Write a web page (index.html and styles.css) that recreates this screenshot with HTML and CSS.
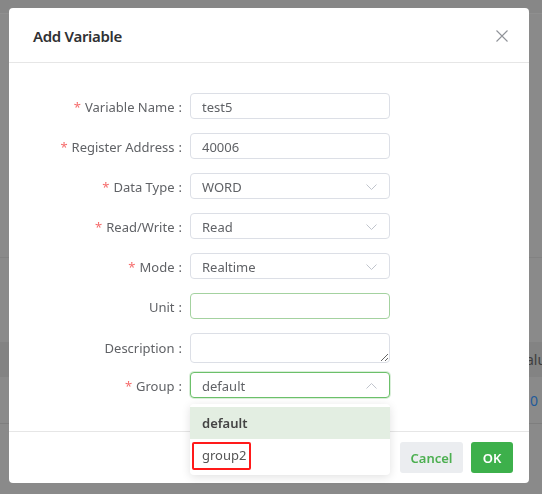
FILE: index.html
```html
<!DOCTYPE html>
<html>
<head>
<meta charset="utf-8">
<link rel="stylesheet" href="styles.css">
</head>
<body>
<div class="page">
  <div class="topbar"></div>
  <div class="page-area"></div>
  <div class="table-head"><span class="th-text">Value</span></div>
  <div class="table-row"><span class="td-link">0</span></div>
</div>

<div class="modal">
  <div class="modal-header">
    <span class="modal-title">Add Variable</span>
    <svg class="close" width="12" height="12" viewBox="0 0 12 12"><path d="M0.5 0.5 L11.5 11.5 M11.5 0.5 L0.5 11.5" stroke="#909399" stroke-width="1.1" fill="none"/></svg>
  </div>
  <div class="modal-body">
    <div class="row">
      <label class="label"><span class="req">*</span>Variable Name<span class="colon">:</span></label>
      <div class="input"><span class="val">test5</span></div>
    </div>
    <div class="row">
      <label class="label"><span class="req">*</span>Register Address<span class="colon">:</span></label>
      <div class="input"><span class="val">40006</span></div>
    </div>
    <div class="row">
      <label class="label"><span class="req">*</span>Data Type<span class="colon">:</span></label>
      <div class="input select"><span class="val">WORD</span>
        <svg class="arrow" width="11" height="6" viewBox="0 0 11 6"><path d="M0.5 0.5 L5.5 5.5 L10.5 0.5" stroke="#c0c4cc" stroke-width="1" fill="none"/></svg>
      </div>
    </div>
    <div class="row">
      <label class="label"><span class="req">*</span>Read/Write<span class="colon">:</span></label>
      <div class="input select"><span class="val">Read</span>
        <svg class="arrow" width="11" height="6" viewBox="0 0 11 6"><path d="M0.5 0.5 L5.5 5.5 L10.5 0.5" stroke="#c0c4cc" stroke-width="1" fill="none"/></svg>
      </div>
    </div>
    <div class="row">
      <label class="label"><span class="req">*</span>Mode<span class="colon">:</span></label>
      <div class="input select"><span class="val">Realtime</span>
        <svg class="arrow" width="11" height="6" viewBox="0 0 11 6"><path d="M0.5 0.5 L5.5 5.5 L10.5 0.5" stroke="#c0c4cc" stroke-width="1" fill="none"/></svg>
      </div>
    </div>
    <div class="row">
      <label class="label">Unit<span class="colon">:</span></label>
      <div class="input focus-soft"></div>
    </div>
    <div class="row row-text">
      <label class="label">Description<span class="colon">:</span></label>
      <textarea class="textarea"></textarea>
    </div>
    <div class="row">
      <label class="label"><span class="req">*</span>Group<span class="colon">:</span></label>
      <div class="group-wrap">
        <div class="input select focus"><span class="val">default</span>
          <svg class="arrow" width="11" height="6" viewBox="0 0 11 6"><path d="M0.5 5.5 L5.5 0.5 L10.5 5.5" stroke="#c0c4cc" stroke-width="1" fill="none"/></svg>
        </div>
        <div class="dropdown">
          <div class="option selected">default</div>
          <div class="option">group2<span class="mark"></span></div>
        </div>
      </div>
    </div>
  </div>
  <div class="modal-footer">
    <button class="btn btn-cancel">Cancel</button>
    <button class="btn btn-ok">OK</button>
  </div>
</div>
</body>
</html>
```

FILE: styles.css
```css
* { box-sizing: border-box; }
html, body { margin: 0; padding: 0; }
body {
  background: #8a8a8a;
  font-family: "Noto Sans", "Open Sans", Arial, sans-serif;
  width: 542px;
  height: 494px;
  overflow: hidden;
}
.page { display: flex; flex-direction: column; }
.topbar { height: 14px; background: #878787; border-bottom: 1px solid #8f8f8f; }
.page-area { height: 244px; border-bottom: 1px solid #828282; }
.table-head {
  margin-top: 84px;
  height: 35px;
  background: #838383;
  display: flex;
  align-items: center;
  justify-content: flex-end;
  font-size: 14px;
  color: #3e3e3e;
}
.th-text { margin-right: -12px; }
.table-row {
  height: 47px;
  border-bottom: 1px solid #7e7e7e;
  display: flex;
  align-items: center;
  justify-content: flex-end;
  font-size: 14px;
}
.td-link { color: #1f5a9a; margin-right: 4px; }

.modal {
  position: fixed;
  left: 9px;
  top: 8px;
  width: 520px;
  height: 475px;
  background: #fff;
  border-radius: 4px;
  display: flex;
  flex-direction: column;
}
.modal-header {
  height: 55px;
  border-bottom: 1px solid #e6e6e6;
  display: flex;
  align-items: center;
  justify-content: space-between;
  padding: 0 21px 0 24px;
}
.modal-title {
  font-size: 15px;
  font-weight: 600;
  letter-spacing: -0.3px;
  color: #303133;
  margin-top: 1px;
}
.close { margin-top: 2px; }
.modal-body {
  flex: 1;
  padding-top: 30px;
}
.row {
  display: flex;
  align-items: center;
  margin-bottom: 14px;
}
.row-text { margin-bottom: 9px; align-items: flex-start; }
.row-text .label { line-height: 28px; }
.label {
  width: 181px;
  padding-right: 8px;
  text-align: right;
  font-size: 13px;
  color: #606266;
  padding-top: 1px;
}
.req { color: #f56c6c; margin-right: 4px; }
.colon { margin-left: 4px; }
.input {
  width: 200px;
  height: 26px;
  border: 1px solid #dcdfe6;
  border-radius: 4px;
  display: flex;
  align-items: center;
  justify-content: space-between;
  padding: 1px 11px 0;
  font-size: 13px;
  color: #606266;
  background: #fff;
}
.arrow { margin-right: 1px; }
.focus-soft { border-color: #a4d2a0; }
.focus { border-color: #6cc06a; box-shadow: 0 0 0 1px rgba(108, 192, 106, 0.25); }
.textarea {
  width: 200px;
  height: 30px;
  border: 1px solid #dcdfe6;
  border-radius: 4px;
  resize: vertical;
  margin: 0;
  font-family: inherit;
  font-size: 13px;
}
.group-wrap { position: relative; }
.dropdown {
  position: absolute;
  left: 0;
  top: 32px;
  width: 200px;
  background: #fff;
  border-radius: 4px;
  box-shadow: 0 2px 10px rgba(0, 0, 0, 0.12);
  padding: 3px 0 4px;
  z-index: 2;
}
.option {
  position: relative;
  height: 32px;
  line-height: 33px;
  padding-left: 12px;
  font-size: 13px;
  color: #555;
}
.option.selected {
  background: #e3eee2;
  font-weight: 600;
  color: #444;
}
.mark {
  position: absolute;
  left: 2px;
  top: 3px;
  width: 59px;
  height: 28px;
  border: 2px solid #ff1a1a;
  border-radius: 2px;
}
.modal-footer {
  border-top: 1px solid #e6e6e6;
  padding: 10px 16px 10px;
  display: flex;
  justify-content: flex-end;
  gap: 8px;
}
.btn {
  height: 31px;
  border: none;
  border-radius: 3px;
  font-family: inherit;
  font-size: 13px;
  font-weight: 600;
  padding: 0;
}
.btn-cancel { width: 63px; background: #ebedf0; color: #4caf50; }
.btn-ok { width: 42px; background: #3db04b; color: #fff; }
```
